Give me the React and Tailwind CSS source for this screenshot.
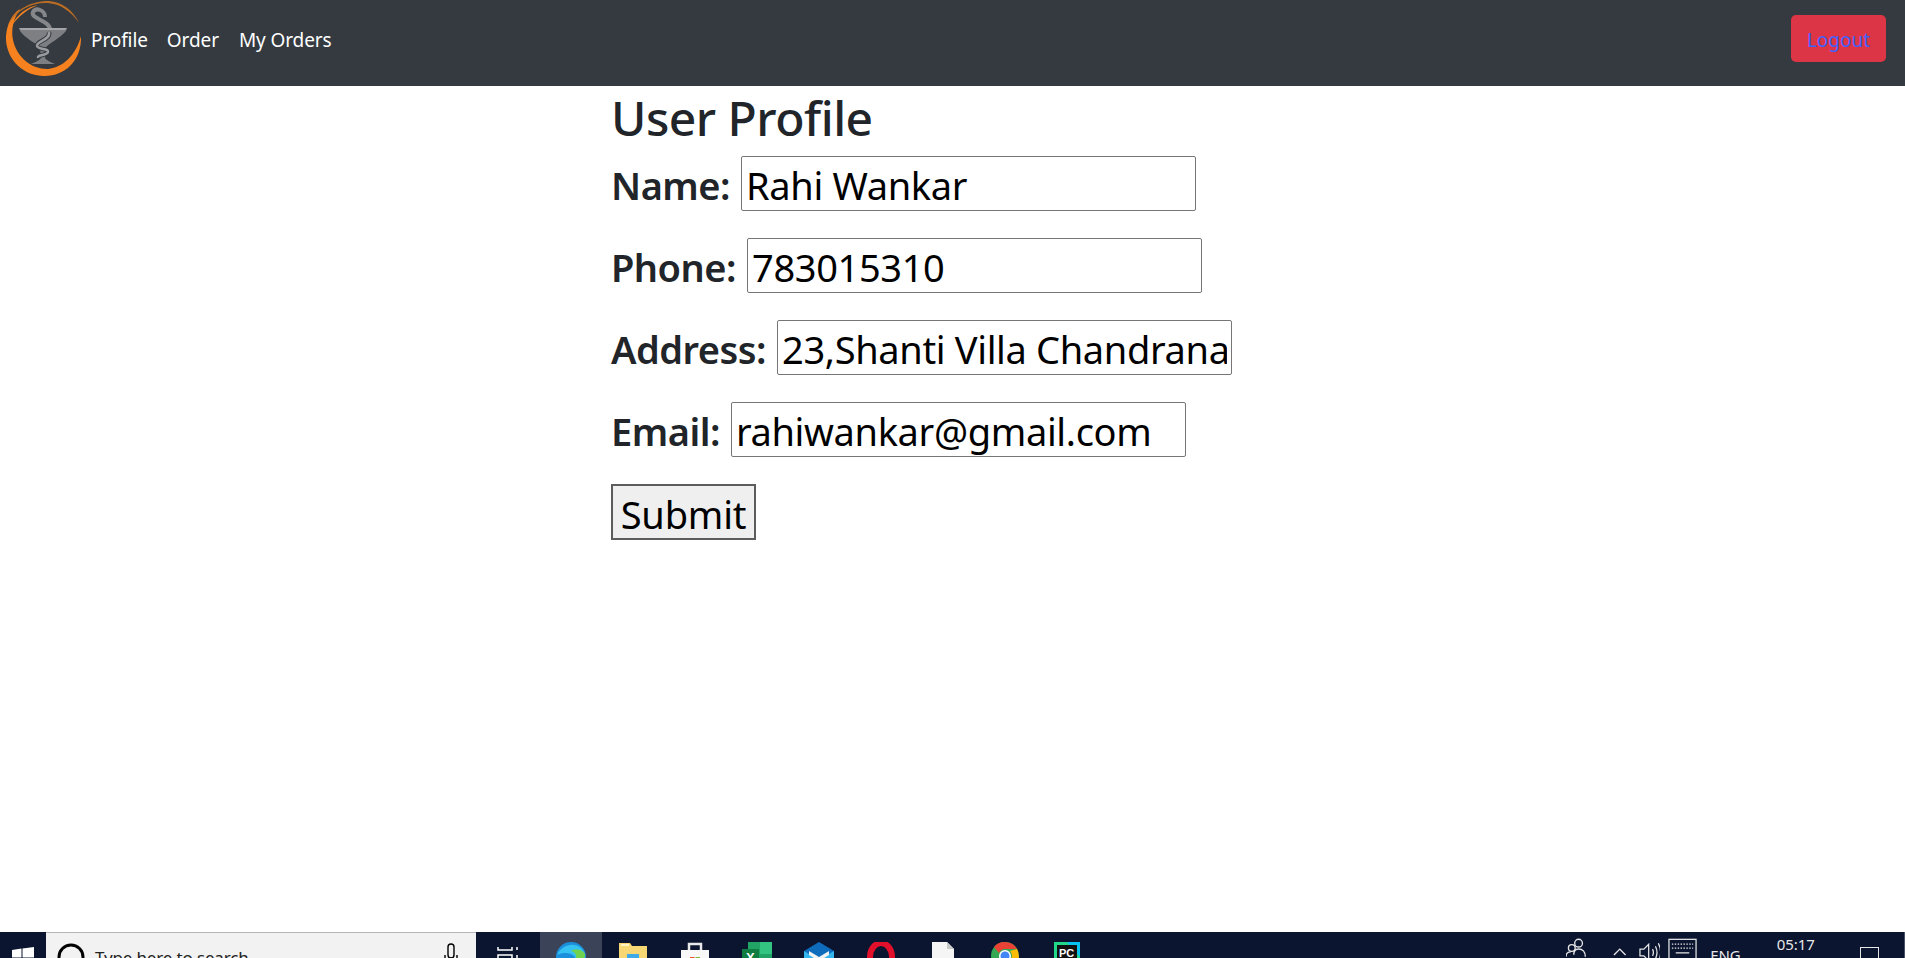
const fields = [
  { label: "Name:", value: "Rahi Wankar" },
  { label: "Phone:", value: "783015310" },
  { label: "Address:", value: "23,Shanti Villa Chandranagar Nagpur" },
  { label: "Email:", value: "rahiwankar@gmail.com" },
];

function Logo() {
  return (
    <svg viewBox="0 0 90 85" className="h-[85px] w-[90px] shrink-0">
      <path d="M81 36 C82 62 63 77 43 76 C20 75 5 56 6 36 C7 24 12 14 20 9 C13 19 11 30 13 40 C17 58 32 69 47 69 C63 68 76 55 81 36Z" fill="#f5821f" />
      <path d="M8 25 C15 8 33 1 49 1 C62 2 73 10 79 23 C71 11 60 4 48 3 C32 2 17 10 8 25Z" fill="#b96c22" />
      <path d="M11 27 C17 13 28 7 38 5 C28 9 18 16 11 27Z" fill="#f5821f" />
      <path d="M45 17 C45 10 36 7 33 12 C30 19 49 20 50 29" fill="none" stroke="#85878a" strokeWidth="4" />
      <path d="M19 28 L67 28 L66 31 C60 38 50 43 46 47 L45 58 C46 60 50 62 55 64 L31 64 C36 62 40 60 41 58 L40 47 C35 43 25 38 20 31Z" fill="#7d7f83" />
      <path d="M19 28 H67 L65 30 H21Z" fill="#a3a5a8" />
      <path d="M49 32 C51 40 36 41 37 46 C38 50 49 48 48 52 C47 56 37 54 38 58" fill="none" stroke="#343a40" strokeWidth="4.5" />
      <path d="M49 32 C51 40 36 41 37 46 C38 50 49 48 48 52 C47 56 37 54 38 58" fill="none" stroke="#9a9c9f" strokeWidth="2.5" />
    </svg>
  );
}

function Edge() {
  return (
    <svg viewBox="0 0 30 30" className="h-[30px] w-[30px]">
      <circle cx="15" cy="15" r="15" fill="#1b8fdc" />
      <path d="M1 13 C6 1 24 -2 29 12 C30 19 21 21 18 19 C23 13 10 8 1 13Z" fill="#35c1f1" />
      <path d="M29 12 C30 19 21 21 18 19 C22 15 20 10 15 9 C21 6 27 8 29 12Z" fill="#6fd34f" />
      <circle cx="15" cy="22" r="5.5" fill="#0b1530" />
    </svg>
  );
}

function Folder() {
  return (
    <svg viewBox="0 0 28 24" className="h-6 w-7">
      <path d="M0 1 H11 L13 4 H28 V24 H0Z" fill="#f7d774" />
      <rect x="2" y="2" width="8" height="2" fill="#fff3c4" />
      <rect x="8" y="12" width="12" height="4" fill="#3fa9e8" />
    </svg>
  );
}

function Store() {
  return (
    <svg viewBox="0 0 28 26" className="h-[26px] w-7">
      <path d="M8 8 V2 H20 V8" fill="none" stroke="#e8e8e8" strokeWidth="2.5" />
      <rect x="0" y="8" width="28" height="18" fill="#f8f8f8" />
      <rect x="9" y="15" width="4.5" height="4.5" fill="#e2572b" />
      <rect x="14.5" y="15" width="4.5" height="4.5" fill="#7db93c" />
    </svg>
  );
}

function Excel() {
  return (
    <svg viewBox="0 0 30 26" className="h-[26px] w-[30px]">
      <rect x="6" y="0" width="24" height="26" fill="#21a366" />
      <rect x="18" y="0" width="12" height="12" fill="#33c481" />
      <rect x="0" y="7" width="17" height="17" fill="#107c41" />
      <text x="4" y="20" fontSize="13" fontWeight="700" fill="#fff" fontFamily="Liberation Sans, sans-serif">X</text>
    </svg>
  );
}

function Mail() {
  return (
    <svg viewBox="0 0 30 26" className="h-[26px] w-[30px]">
      <path d="M15 0 L30 9 V26 H0 V9Z" fill="#0f6cbd" />
      <path d="M0 9 L15 18 L30 9 V26 H0Z" fill="#35b5ee" />
      <path d="M5 9 L15 15 L25 9 V13 L15 19 L5 13Z" fill="#f2f2f2" />
    </svg>
  );
}

function Opera() {
  return (
    <svg viewBox="0 0 28 28" className="h-7 w-7">
      <ellipse cx="14" cy="15" rx="11" ry="14" fill="none" stroke="#e3102b" strokeWidth="6" />
    </svg>
  );
}

function FileIcon() {
  return (
    <svg viewBox="0 0 22 26" className="h-[26px] w-[22px]">
      <path d="M0 0 H15 L22 7 V26 H0Z" fill="#f5f5f5" />
      <path d="M15 0 L22 7 H15Z" fill="#c9c9c9" />
    </svg>
  );
}

function Chrome() {
  return (
    <svg viewBox="0 0 28 28" className="h-7 w-7">
      <circle cx="14" cy="14" r="14" fill="#34a853" />
      <path d="M14 0 A14 14 0 0 1 26 7 H14 A7 7 0 0 0 8 11 L3 5 A14 14 0 0 1 14 0Z" fill="#ea4335" />
      <path d="M26 7 A14 14 0 0 1 14 28 L20 17 A7 7 0 0 0 19 9Z" fill="#fbbc05" />
      <circle cx="14" cy="14" r="6" fill="#fff" />
      <circle cx="14" cy="14" r="4.5" fill="#4285f4" />
    </svg>
  );
}

function PyCharm() {
  return (
    <svg viewBox="0 0 26 26" className="h-[26px] w-[26px]">
      <rect width="26" height="26" fill="#21d789" />
      <path d="M13 0 H26 V15Z" fill="#07c3f2" />
      <rect x="3" y="3" width="20" height="20" fill="#111" />
      <text x="5" y="15" fontSize="11" fontWeight="700" fill="#fff" fontFamily="Liberation Sans, sans-serif">PC</text>
    </svg>
  );
}

const taskApps = [
  { id: "edge", Icon: Edge, active: true },
  { id: "folder", Icon: Folder },
  { id: "store", Icon: Store },
  { id: "excel", Icon: Excel },
  { id: "mail", Icon: Mail },
  { id: "opera", Icon: Opera },
  { id: "file", Icon: FileIcon },
  { id: "chrome", Icon: Chrome },
  { id: "pycharm", Icon: PyCharm },
];

function Taskbar() {
  return (
    <footer className="flex h-[26px] shrink-0 overflow-hidden bg-[#0b1530] text-[#e6e6e6]">
      <div className="flex w-[46px] shrink-0 justify-center pt-[15px]">
        <svg viewBox="0 0 22 22" className="h-[22px] w-[22px]" fill="#fff">
          <path d="M0 3 L9.5 1.6 V10.4 H0Z M10.5 1.4 L22 0 V10.4 H10.5Z M0 11.4 H9.5 V20 L0 18.8Z M10.5 11.4 H22 V22 L10.5 20.4Z" />
        </svg>
      </div>
      <div className="flex w-[430px] shrink-0 items-start border-t border-[#b5b5b5] bg-[#f2f2f2] pl-[11px] pt-[10px] text-[#222]">
        <svg viewBox="0 0 28 28" className="h-7 w-7 shrink-0" fill="none" stroke="#000" strokeWidth="3">
          <circle cx="14" cy="14" r="12" />
        </svg>
        <span className="ml-[10px] mt-[3px] text-[17px] leading-6 tracking-[-0.15px]">Type here to search</span>
        <svg viewBox="0 0 14 24" className="ml-auto mr-[18px] h-6 w-[14px]" fill="none" stroke="#000" strokeWidth="1.4">
          <rect x="4" y="1" width="6" height="14" rx="3" />
          <path d="M1 12 V15 C1 18 4 19 7 19 C10 19 13 18 13 15 V12 M7 19 V24" />
        </svg>
      </div>
      <div className="flex w-[64px] shrink-0 justify-center pt-[14px]">
        <svg viewBox="0 0 22 20" className="h-5 w-[22px]" fill="none" stroke="#fff" strokeWidth="1.5">
          <path d="M1 1 V4 H15 V1 M1 18 V9 H15 V18 H1 M20 1 V4 M20 9 V12" />
        </svg>
      </div>
      {taskApps.map(({ id, Icon, active }) => (
        <div key={id} className={`flex w-[62px] shrink-0 justify-center pt-[10px] ${active ? "bg-[#3b4358]" : ""}`}>
          <Icon />
        </div>
      ))}
      <div className="ml-auto flex w-[340px] shrink-0 items-start">
        <svg viewBox="0 0 22 22" className="ml-[1px] mt-[5px] h-[22px] w-[22px]" fill="none" stroke="#e6e6e6" strokeWidth="1.4">
          <circle cx="13" cy="6" r="4" />
          <circle cx="6" cy="11" r="3.5" />
          <path d="M8 18 C8 14 10 12 13 12 C17 12 20 15 20 20 M0 20 C0 17 2 15 5 15" />
        </svg>
        <svg viewBox="0 0 14 8" className="ml-[26px] mt-[16px] h-2 w-[14px]" fill="none" stroke="#e6e6e6" strokeWidth="1.4">
          <path d="M1 7 L7 1 L13 7" />
        </svg>
        <svg viewBox="0 0 22 22" className="ml-[12px] mt-[9px] h-[22px] w-[22px]" fill="none" stroke="#e6e6e6" strokeWidth="1.3">
          <path d="M1 8 H5 L10 3 V20 L5 15 H1Z M14 8 C15 10 15 13 14 15 M17 5 C19 9 19 14 17 18 M20 2 C23 8 23 15 20 21" />
        </svg>
        <svg viewBox="0 0 30 22" className="ml-[8px] mt-[6px] h-[22px] w-[30px]" fill="none" stroke="#e6e6e6" strokeWidth="1.3">
          <rect x="1" y="1" width="28" height="20" />
          <path d="M4 6 H26 M4 10 H26" strokeDasharray="1.5 1.5" />
          <path d="M8 15 H22" />
        </svg>
        <span className="ml-[13px] mt-[13px] text-[15px] leading-5">ENG</span>
        <span className="ml-[36px] mt-[2px] text-[15px] leading-5 tracking-[-0.1px]">05:17</span>
        <div className="ml-[45px] mt-[15px] h-5 w-5 border border-[#e6e6e6]" />
        <div className="ml-[25px] h-full w-px bg-[#4a5268]" />
      </div>
    </footer>
  );
}

export default function App() {
  return (
    <div className="flex h-[958px] w-[1905px] flex-col overflow-hidden bg-white font-['Noto_Sans',sans-serif] text-[#212529]">
      <nav className="flex h-[86px] shrink-0 items-start justify-between bg-[#343a40]">
        <div className="flex items-start text-[19px] leading-6 tracking-[-0.1px] text-white">
          <Logo />
          <a className="ml-[1px] mt-[28px]">Profile</a>
          <a className="ml-[19px] mt-[28px]">Order</a>
          <a className="ml-[20px] mt-[28px]">My Orders</a>
        </div>
        <button className="mr-[19px] mt-[15px] h-[47px] w-[95px] rounded-[5px] bg-[#dc3545] pt-[3px] text-[19px] text-[#3f62ff]">Logout</button>
      </nav>
      <main className="mx-auto w-[683px] flex-1">
        <h2 className="mb-[6px] text-[48px] font-medium leading-[64px] tracking-[-0.5px]">User Profile</h2>
        <form>
          {fields.map((f) => (
            <div key={f.label} className="mb-[27px] flex items-center gap-[11px]">
              <label className="pt-[3px] text-[38px] font-semibold leading-[52px] tracking-[-0.5px]">{f.label}</label>
              <input
                readOnly
                value={f.value}
                className="h-[55px] w-[455px] rounded-[2px] border border-[#767676] px-[4px] pt-[3px] text-[38px] tracking-[-0.35px] text-black outline-none"
              />
            </div>
          ))}
          <button type="button" className="h-[56px] w-[145px] border-2 border-[#5c5c5c] bg-[#efefef] text-[38px] tracking-[-0.2px] text-black">Submit</button>
        </form>
      </main>
      <Taskbar />
    </div>
  );
}
